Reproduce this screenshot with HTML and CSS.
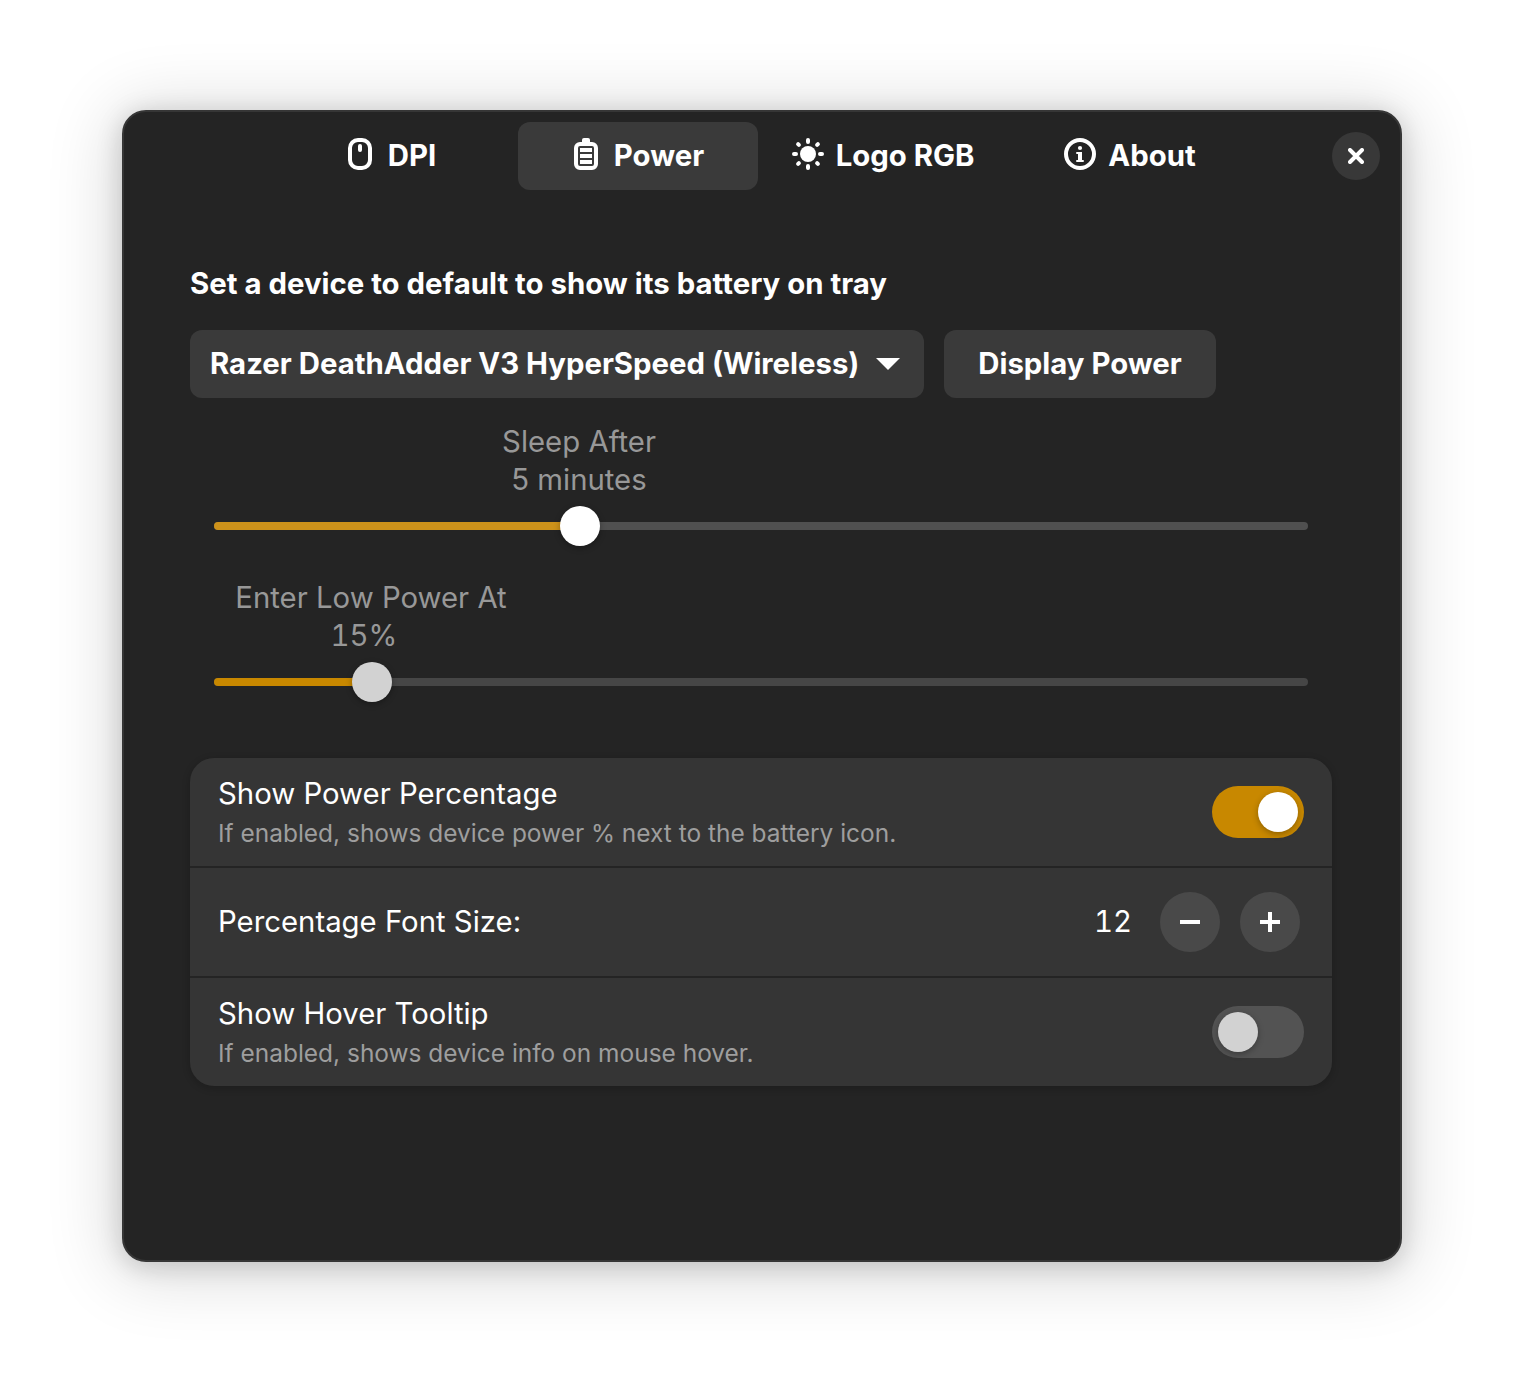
FILE: index.html
```html
<!DOCTYPE html>
<html lang="en">
<head>
<meta charset="utf-8">
<title>Power</title>
<link rel="stylesheet" href="styles.css">
</head>
<body>
<main class="window">
  <header class="headerbar">
    <nav class="tabs">
      <button class="tab">
        <svg class="icon" viewBox="0 0 16 16"><rect x="3" y="1" width="10" height="14" rx="4" fill="none" stroke="currentColor" stroke-width="2"/><rect x="7" y="3" width="2" height="4" rx="1" fill="currentColor"/></svg>
        <span>DPI</span>
      </button>
      <button class="tab active">
        <svg class="icon" viewBox="0 0 16 16"><path d="M6 3V1a1 1 0 0 1 1-1h2a1 1 0 0 1 1 1v2z" fill="currentColor"/><rect x="3" y="3" width="10" height="12" rx="2" fill="none" stroke="currentColor" stroke-width="2"/><path d="M5 5h6v2H5zM5 8h6v2H5zM5 11h6v2H5z" fill="currentColor"/></svg>
        <span>Power</span>
      </button>
      <button class="tab">
        <svg class="icon" viewBox="0 0 16 16"><circle cx="8" cy="8" r="4" fill="currentColor"/><path d="M8 1v1M8 14v1M1 8h1M14 8h1M3.05 3.05l.4.4M12.55 12.55l.4.4M12.95 3.05l-.4.4M3.45 12.55l-.4.4" fill="none" stroke="currentColor" stroke-width="2" stroke-linecap="round"/></svg>
        <span>Logo RGB</span>
      </button>
      <button class="tab">
        <svg class="icon" viewBox="0 0 16 16"><circle cx="8" cy="8" r="7" fill="none" stroke="currentColor" stroke-width="2"/><circle cx="8" cy="5" r="1.05" fill="currentColor"/><path d="M6.5 7H9v4h.5a.5.5 0 0 1 0 1h-3a.5.5 0 0 1 0-1H7V8h-.5a.5.5 0 0 1 0-1z" fill="currentColor"/></svg>
        <span>About</span>
      </button>
    </nav>
    <button class="close" aria-label="Close"><svg class="close-icon" viewBox="0 0 16 16"><path d="M2 2l12 12M14 2L2 14" stroke="currentColor" stroke-width="4" stroke-linecap="round"/></svg></button>
  </header>

  <section class="page">
    <h1 class="heading">Set a device to default to show its battery on tray</h1>
    <div class="device-row">
      <button class="button dropdown"><span>Razer DeathAdder V3 HyperSpeed (Wireless)</span><svg class="arrow" viewBox="0 0 24 12"><path d="M0 0h24L12 12z" fill="currentColor"/></svg></button>
      <button class="button display">Display Power</button>
    </div>

    <div class="scale hovered" style="--value: 366px">
      <div class="scale-label">Sleep After<br>5 minutes</div>
      <div class="track"><div class="fill"></div><div class="knob"></div></div>
    </div>
    <div class="scale" style="--value: 158px">
      <div class="scale-label">Enter Low Power At<br><span class="number padded">15%</span></div>
      <div class="track"><div class="fill"></div><div class="knob"></div></div>
    </div>

    <div class="card">
      <div class="row">
        <div class="texts"><div class="title">Show Power Percentage</div><div class="subtitle">If enabled, shows device power % next to the battery icon.</div></div>
        <div class="switch on"><div class="knob"></div></div>
      </div>
      <div class="row spin">
        <div class="title">Percentage Font Size:</div>
        <div class="spinner">
          <span class="count number">12</span>
          <button class="step" aria-label="Decrease"><svg class="step-icon" viewBox="0 0 20 20"><path d="M0 8h20v4H0z" fill="currentColor"/></svg></button>
          <button class="step" aria-label="Increase"><svg class="step-icon" viewBox="0 0 20 20"><path d="M0 8h8V0h4v8h8v4h-8v8H8v-8H0z" fill="currentColor"/></svg></button>
        </div>
      </div>
      <div class="row">
        <div class="texts"><div class="title">Show Hover Tooltip</div><div class="subtitle">If enabled, shows device info on mouse hover.</div></div>
        <div class="switch"><div class="knob"></div></div>
      </div>
    </div>
  </section>
</main>
</body>
</html>
```
FILE: styles.css
```css
* { box-sizing: border-box; }
body {
  margin: 0;
  padding: 110px 122px 134px;
  background: #fff;
  color: #fff;
  font: 400 29.333px/38px Inter, sans-serif;
}
button { border: 0; padding: 0; font: inherit; color: inherit; }
svg { display: block; flex: none; }
.window {
  width: 1280px;
  height: 1152px;
  border: 2px solid #363636;
  border-radius: 24px;
  background: #242424;
  box-shadow: 0 4px 24px 2px rgba(0,0,0,.15), 0 6px 68px 10px rgba(0,0,0,.14);
}
.headerbar {
  display: grid;
  grid-template-columns: 1fr 48px;
  align-items: center;
  height: 88px;
  padding: 0 20px 0 148px;
}
.tabs { display: flex; gap: 6px; }
.tab {
  display: flex;
  justify-content: center;
  align-items: center;
  gap: 12px;
  width: 240px;
  height: 68px;
  padding-right: 2px;
  border-radius: 12px;
  background: none;
  font-weight: 700;
}
.tab:first-child { padding-right: 4px; }
.tab:last-child { padding-right: 0; }
.tab.active { background: #3a3a3a; }
.icon { width: 32px; height: 32px; margin-bottom: 4px; }
.close {
  display: grid;
  place-items: center;
  width: 48px;
  height: 48px;
  border-radius: 50%;
  background: #383838;
}
.close-icon { width: 16px; height: 16px; }
.page { padding: 65px 68px 0 66px; }
.heading { margin: 0 0 27px; font-size: 29.36px; font-weight: 700; }
.device-row { display: flex; gap: 20px; margin-bottom: 25px; }
.button { height: 68px; border-radius: 12px; background: #3a3a3a; font-weight: 700; white-space: nowrap; }
.dropdown { display: flex; justify-content: space-between; align-items: center; width: 734px; padding: 0 24px 0 20px; }
.arrow { width: 24px; height: 12px; }
.display { width: 272px; }
.scale { height: 156px; padding: 0 24px; }
.scale-label {
  width: fit-content;
  margin-left: calc(var(--value) - 1px);
  transform: translateX(-50%);
  text-align: center;
  white-space: nowrap;
  color: #989898;
}
.number { font-feature-settings: "tnum"; }
.padded { padding-right: 14px; }
.track { display: flex; align-items: center; height: 8px; margin-top: 23px; border-radius: 4px; background: #464646; }
.fill { width: var(--value); height: 8px; border-radius: 4px 0 0 4px; background: #c88800; }
.knob { flex: none; width: 40px; height: 40px; border-radius: 50%; background: #d2d2d2; box-shadow: 0 2px 6px rgba(0,0,0,.3); }
.track .knob { margin-left: -20px; }
.hovered .track { background: #505050; }
.hovered .fill { background: #cd921a; }
.hovered .knob, .on .knob { background: #fff; }
.card {
  margin-top: 23px;
  border-radius: 24px;
  background: #353535;
  box-shadow: 0 2px 6px 2px rgba(0,0,0,.14);
}
.row { display: flex; justify-content: space-between; align-items: center; height: 108px; padding: 0 28px; }
.row + .row { height: 110px; border-top: 2px solid #242424; }
.texts { padding-top: 1px; }
.subtitle { margin-top: 3px; font-size: 24.46px; line-height: 34px; color: #9e9e9e; }
.switch { display: flex; width: 92px; height: 52px; padding: 6px; border-radius: 26px; background: #535353; }
.switch.on { justify-content: flex-end; background: #c88800; }
.spinner { display: flex; align-items: center; gap: 20px; margin-right: 4px; }
.count { margin-right: 8px; }
.step { display: grid; place-items: center; width: 60px; height: 60px; border-radius: 50%; background: #494949; }
.step-icon { width: 20px; height: 20px; }
```
